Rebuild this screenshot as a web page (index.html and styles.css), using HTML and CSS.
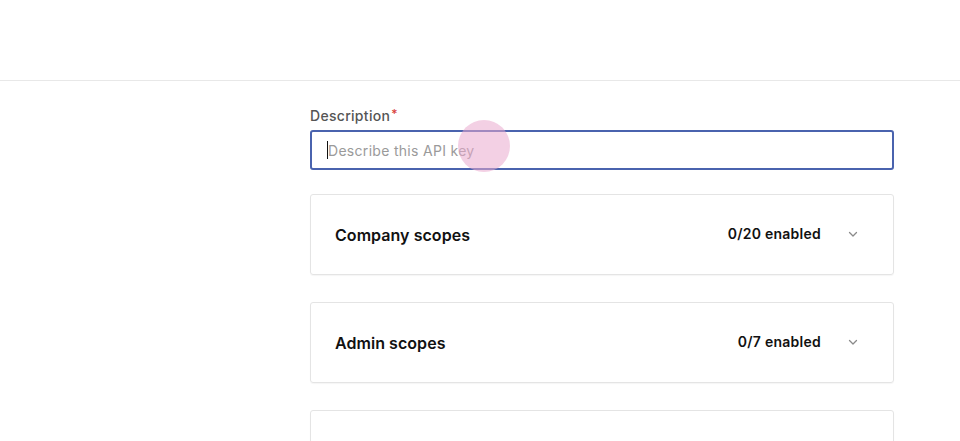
FILE: index.html
```html
<!DOCTYPE html>
<html>
<head>
<meta charset="utf-8">
<link rel="stylesheet" href="styles.css">
</head>
<body>
<header class="topbar"></header>
<main class="content">
  <div class="form">
    <label class="label">Description<span class="req">*</span></label>
    <div class="input-wrap">
      <div class="input"><span class="caret"></span><span class="placeholder">Describe this API key</span></div>
      <span class="click-dot"></span>
    </div>
    <section class="card">
      <h3 class="card-title">Company scopes</h3>
      <div class="card-meta">
        <span class="count">0/20 enabled</span>
        <svg class="chev" width="12" height="12" viewBox="0 0 12 12"><path d="M2.5 4.5 L6 8 L9.5 4.5" fill="none" stroke="#8a8a8a" stroke-width="1.3" stroke-linecap="round" stroke-linejoin="round"/></svg>
      </div>
    </section>
    <section class="card">
      <h3 class="card-title">Admin scopes</h3>
      <div class="card-meta">
        <span class="count">0/7 enabled</span>
        <svg class="chev" width="12" height="12" viewBox="0 0 12 12"><path d="M2.5 4.5 L6 8 L9.5 4.5" fill="none" stroke="#8a8a8a" stroke-width="1.3" stroke-linecap="round" stroke-linejoin="round"/></svg>
      </div>
    </section>
    <section class="card"></section>
  </div>
</main>
</body>
</html>
```
FILE: styles.css
```css
html, body {
  margin: 0;
  padding: 0;
  background: #fff;
  font-family: Inter, "Liberation Sans", sans-serif;
  color: #111;
  overflow: hidden;
  height: 441px;
}
.topbar {
  height: 80px;
  border-bottom: 1px solid #e8e8e8;
}
.content {
  padding-left: 310px;
  padding-top: 25px;
  height: 335px;
  overflow: hidden;
}
.form {
  width: 584px;
  display: flex;
  flex-direction: column;
}
.label {
  font-size: 14px;
  font-weight: 500;
  color: #555;
  line-height: 20px;
  letter-spacing: 0.3px;
  margin-bottom: 4px;
}
.req {
  color: #d9423a;
  margin-left: 1px;
  font-size: 12px;
  vertical-align: top;
  line-height: 16px;
}
.input-wrap {
  position: relative;
  margin-bottom: 24px;
}
.input {
  height: 40px;
  box-sizing: border-box;
  border: 2px solid #4a63ae;
  border-radius: 3px;
  display: flex;
  align-items: center;
  padding-left: 15px;
}
.caret {
  width: 1px;
  height: 18px;
  background: #111;
}
.placeholder {
  font-size: 14px;
  color: #9a9a9a;
  line-height: 20px;
  letter-spacing: 0.3px;
  padding-top: 2px;
}
.click-dot {
  position: absolute;
  left: 148px;
  top: -10px;
  width: 52px;
  height: 52px;
  border-radius: 50%;
  background: rgba(234, 170, 205, 0.55);
}
.card {
  height: 81px;
  flex-shrink: 0;
  box-sizing: border-box;
  border: 1px solid #e4e4e4;
  border-radius: 3px;
  box-shadow: 0 1px 1px rgba(0,0,0,0.04);
  display: flex;
  align-items: center;
  justify-content: space-between;
  padding: 0 34px 0 24px;
  margin-bottom: 27px;
}
.card-title {
  margin: 0;
  font-size: 16px;
  font-weight: 600;
  color: #111;
  letter-spacing: 0.05px;
}
.card-meta {
  display: flex;
  align-items: center;
  gap: 26px;
  margin-top: -2px;
}
.count {
  font-size: 14px;
  font-weight: 600;
  color: #111;
  letter-spacing: 0.25px;
}
.chev {
  display: block;
}
```
